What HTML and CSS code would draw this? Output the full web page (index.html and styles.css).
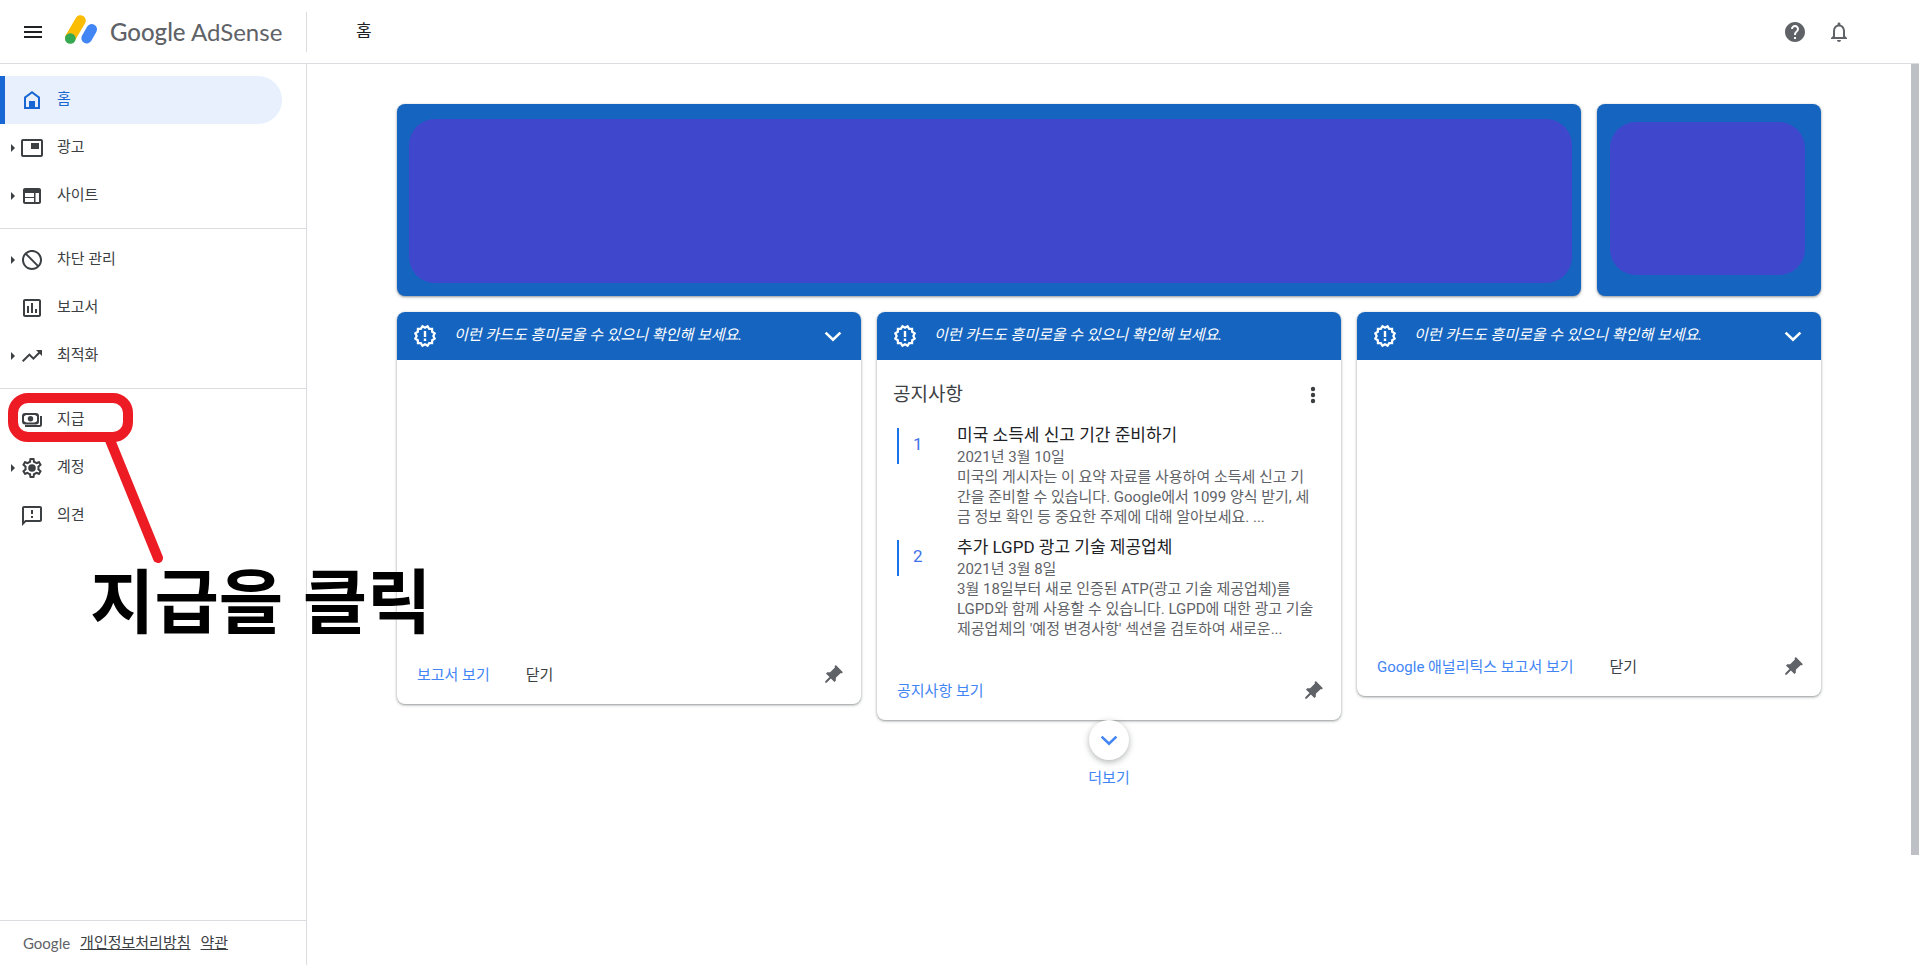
FILE: index.html
```html
<!DOCTYPE html>
<html lang="ko">
<head>
    <meta charset="UTF-8">
    <meta name="viewport" content="width=device-width, initial-scale=1.0">
    <title>Google AdSense</title>
    <link rel="stylesheet" href="styles.css">
</head>
<body>
    <!-- Shared icons -->
    <svg class="sprite" aria-hidden="true">
        <symbol id="badge" viewBox="0 0 24 24">
            <path d="M21.7 14.6 19.2 16.2 19.1 19.1 16.2 19.2 14.6 21.7 12 20.3 9.4 21.7 7.8 19.2 4.9 19.1 4.8 16.2 2.3 14.6 3.7 12 2.3 9.4 4.8 7.8 4.9 4.9 7.8 4.8 9.4 2.3 12 3.7 14.6 2.3 16.2 4.8 19.1 4.9 19.2 7.8 21.7 9.4 20.3 12z" fill="none" stroke="currentColor" stroke-width="2.2"/>
            <path d="M10.8 7h2.4v6h-2.4zm0 7.6h2.4V17h-2.4z"/>
        </symbol>
        <symbol id="chevron" viewBox="0 0 24 24">
            <path d="M4.600 8.600l7.400 7 7.400-7" fill="none" stroke="currentColor" stroke-width="2.6"/>
        </symbol>
        <symbol id="pin" viewBox="0 0 24 24">
            <path transform="rotate(45 12 12)" d="M16 5h1V3H7v2h1v7l-2 2v2h5v6l1 1 1-1v-6h5v-2l-2-2V5z"/>
        </symbol>
    </svg>

    <header class="topbar">
        <div class="brand">
            <button class="icon-btn menu-btn" aria-label="메뉴">
                <svg class="icon" viewBox="0 0 24 24"><path d="M3 18h18v-2H3v2zm0-5h18v-2H3v2zm0-7v2h18V6H3z"/></svg>
            </button>
            <svg class="logo" viewBox="0 0 34 32">
                <path d="M16.500 6.500 6.300 24" stroke="#fbbc04" stroke-width="10.600" stroke-linecap="round"/>
                <circle cx="6.300" cy="24.500" r="5.300" fill="#34a853"/>
                <path d="M27.700 15.300 22.700 24.200" stroke="#4285f4" stroke-width="10.600" stroke-linecap="round"/>
            </svg>
            <span class="brand-name"><b>Google</b> AdSense</span>
        </div>
        <h1 class="page-title">홈</h1>
        <div class="actions">
            <button class="icon-btn" aria-label="도움말">
                <svg class="icon" viewBox="0 0 24 24"><path d="M12 2C6.480 2 2 6.480 2 12s4.480 10 10 10 10-4.480 10-10S17.520 2 12 2zm1 17h-2v-2h2v2zm2.070-7.750l-.9.920C13.450 12.900 13 13.500 13 15h-2v-.5c0-1.100.45-2.100 1.170-2.830l1.240-1.260c.37-.36.590-.86.590-1.410 0-1.100-.9-2-2-2s-2 .9-2 2H8c0-2.210 1.790-4 4-4s4 1.790 4 4c0 .88-.36 1.680-.93 2.250z"/></svg>
            </button>
            <button class="icon-btn" aria-label="알림">
                <svg class="icon" viewBox="0 0 24 24"><path d="M12 22c1.100 0 2-.9 2-2h-4c0 1.100.9 2 2 2zm6-6v-5c0-3.070-1.630-5.640-4.500-6.320V4c0-.83-.67-1.500-1.500-1.500s-1.500.67-1.500 1.500v.68C7.640 5.360 6 7.920 6 11v5l-2 2v1h16v-1l-2-2zm-2 1H8v-6c0-2.480 1.510-4.500 4-4.500s4 2.020 4 4.500v6z"/></svg>
            </button>
        </div>
    </header>

    <div class="layout">
        <aside class="sidebar">
            <nav class="nav">
                <div class="nav-group">
                    <a class="nav-item active" href="#">
                        <svg class="icon" viewBox="0 0 24 24"><path fill-rule="evenodd" d="M4 21V9l8-6 8 6v12H4zm2-2h3v-6h6v6h3v-9l-6-4.500L6 10v9z"/><path d="M9 13h6v8H9z"/></svg>
                        <span>홈</span>
                    </a>
                    <a class="nav-item expandable" href="#">
                        <svg class="icon" viewBox="0 0 24 24"><path d="M19 7h-8v6h8V7zm2-4H3c-1.100 0-2 .9-2 2v14c0 1.100.9 2 2 2h18c1.100 0 2-.9 2-2V5c0-1.100-.9-2-2-2zm0 16H3V5h18v14z"/></svg>
                        <span>광고</span>
                    </a>
                    <a class="nav-item expandable" href="#">
                        <svg class="icon" viewBox="0 0 24 24"><path fill-rule="evenodd" d="M5 4h14c1.100 0 2 .9 2 2v12c0 1.100-.9 2-2 2H5c-1.100 0-2-.9-2-2V6c0-1.100.9-2 2-2zm0 5v4h9V9H5zm0 5v4h9v-4H5zm10.500-5v9H19V9h-3.500z"/></svg>
                        <span>사이트</span>
                    </a>
                </div>
                <div class="nav-group">
                    <a class="nav-item expandable" href="#">
                        <svg class="icon" viewBox="0 0 24 24"><path d="M12 2C6.480 2 2 6.480 2 12s4.480 10 10 10 10-4.480 10-10S17.520 2 12 2zM4 12c0-4.420 3.580-8 8-8 1.850 0 3.550.63 4.900 1.690L5.690 16.900C4.630 15.550 4 13.850 4 12zm8 8c-1.850 0-3.550-.63-4.900-1.690L18.310 7.100C19.370 8.450 20 10.150 20 12c0 4.420-3.580 8-8 8z" transform="matrix(-1 0 0 1 24 0)"/></svg>
                        <span>차단 관리</span>
                    </a>
                    <a class="nav-item" href="#">
                        <svg class="icon" viewBox="0 0 24 24"><path d="M9 17H7v-7h2v7zm4 0h-2V7h2v10zm4 0h-2v-4h2v4zm2 2H5V5h14v14zm0-16H5c-1.100 0-2 .9-2 2v14c0 1.100.9 2 2 2h14c1.100 0 2-.9 2-2V5c0-1.100-.9-2-2-2z"/></svg>
                        <span>보고서</span>
                    </a>
                    <a class="nav-item expandable" href="#">
                        <svg class="icon" viewBox="0 0 24 24"><path d="M16 6l2.290 2.290-4.880 4.880-4-4L2 16.590 3.410 18l6-6 4 4 6.300-6.290L22 12V6z"/></svg>
                        <span>최적화</span>
                    </a>
                </div>
                <div class="nav-group">
                    <a class="nav-item" href="#">
                        <svg class="icon" viewBox="0 0 24 24">
                            <rect x="3" y="6" width="15" height="9.400" rx="2" fill="none" stroke="currentColor" stroke-width="2"/>
                            <circle cx="10.500" cy="10.700" r="2.700"/>
                            <path d="M3 6h4.500L3 9zM18 6h-4.500L18 9zM3 15.400h4.500L3 12.400zM18 15.400h-4.500l4.500-3z"/>
                            <path d="M21 8v8.500a1.500 1.500 0 0 1-1.500 1.500H5" fill="none" stroke="currentColor" stroke-width="2"/>
                        </svg>
                        <span>지급</span>
                    </a>
                    <a class="nav-item expandable" href="#">
                        <svg class="icon" viewBox="0 0 24 24"><path d="M19.430 12.980c.04-.32.070-.64.070-.98 0-.34-.03-.66-.07-.98l2.110-1.650c.19-.15.240-.42.120-.64l-2-3.460c-.09-.16-.26-.25-.44-.25-.06 0-.12.010-.17.030l-2.490 1c-.52-.4-1.080-.73-1.690-.98l-.38-2.650C14.460 2.180 14.250 2 14 2h-4c-.25 0-.46.180-.49.420l-.38 2.650c-.61.250-1.170.590-1.690.980l-2.490-1c-.06-.02-.12-.03-.18-.03-.17 0-.34.090-.43.250l-2 3.460c-.13.220-.07.490.120.640l2.110 1.650c-.04.320-.07.650-.07.980 0 .33.030.66.070.98l-2.110 1.650c-.19.150-.24.420-.12.640l2 3.460c.09.160.26.250.44.250.06 0 .12-.01.170-.03l2.490-1c.52.400 1.080.730 1.690.980l.38 2.650c.03.240.24.420.49.420h4c.25 0 .46-.18.490-.42l.38-2.650c.61-.25 1.170-.59 1.690-.98l2.490 1c.06.020.12.030.18.030.17 0 .34-.09.430-.25l2-3.460c.12-.22.070-.49-.12-.64l-2.110-1.650zm-1.980-1.710c.04.310.05.520.05.730 0 .21-.02.430-.05.730l-.14 1.130.89.700 1.080.840-.7 1.210-1.270-.51-1.040-.42-.9.680c-.43.320-.84.560-1.250.730l-1.060.430-.16 1.130-.2 1.350h-1.400l-.19-1.350-.16-1.130-1.060-.43c-.43-.18-.83-.41-1.230-.71l-.91-.7-1.060.430-1.270.510-.7-1.210 1.080-.84.890-.7-.14-1.130c-.03-.31-.05-.54-.05-.74s.02-.43.050-.73l.14-1.130-.89-.7-1.080-.84.700-1.210 1.270.510 1.040.420.900-.68c.43-.32.840-.56 1.250-.73l1.060-.43.160-1.130.2-1.350h1.390l.19 1.350.16 1.130 1.060.430c.43.180.83.410 1.230.710l.91.700 1.060-.43 1.270-.51.700 1.210-1.070.850-.89.700.14 1.130z"/><circle cx="12" cy="12" r="3.800"/></svg>
                        <span>계정</span>
                    </a>
                    <a class="nav-item" href="#">
                        <svg class="icon" viewBox="0 0 24 24"><path d="M20 2H4c-1.100 0-2 .9-2 2v18l4-4h14c1.100 0 2-.9 2-2V4c0-1.100-.9-2-2-2zm0 14H5.200L4 17.200V4h16v12zm-9-4h2v2h-2zm0-6h2v4h-2z"/></svg>
                        <span>의견</span>
                    </a>
                </div>
            </nav>
            <div class="legal">
                <span class="legal-brand">Google</span>
                <a href="#">개인정보처리방침</a>
                <a href="#">약관</a>
            </div>
        </aside>

        <main class="main">
            <div class="summary">
                <section class="panel"><div class="mask"></div></section>
                <section class="panel panel-small"><div class="mask"></div></section>
            </div>

            <div class="cards">
                <section class="card">
                    <div class="card-head">
                        <svg class="icon"><use href="#badge"/></svg>
                        <em>이런 카드도 흥미로울 수 있으니 확인해 보세요.</em>
                        <button class="icon-btn" aria-label="접기"><svg class="icon"><use href="#chevron"/></svg></button>
                    </div>
                    <div class="card-body body-report"></div>
                    <div class="card-foot">
                        <a href="#">보고서 보기</a>
                        <button class="text-btn">닫기</button>
                        <button class="icon-btn pin-btn" aria-label="고정"><svg class="icon"><use href="#pin"/></svg></button>
                    </div>
                </section>

                <section class="card">
                    <div class="card-head">
                        <svg class="icon"><use href="#badge"/></svg>
                        <em>이런 카드도 흥미로울 수 있으니 확인해 보세요.</em>
                    </div>
                    <div class="card-body body-news">
                        <div class="news-head">
                            <h2>공지사항</h2>
                            <button class="icon-btn" aria-label="더보기 메뉴">
                                <svg class="icon" viewBox="0 0 24 24"><circle cx="12" cy="6" r="2.200"/><circle cx="12" cy="12" r="2.200"/><circle cx="12" cy="18" r="2.200"/></svg>
                            </button>
                        </div>
                        <article class="news">
                            <span class="news-num">1</span>
                            <div>
                                <h3>미국 소득세 신고 기간 준비하기</h3>
                                <time>2021년 3월 10일</time>
                                <p>미국의 게시자는 이 요약 자료를 사용하여 소득세 신고 기<br>간을 준비할 수 있습니다. Google에서 1099 양식 받기, 세<br>금 정보 확인 등 중요한 주제에 대해 알아보세요. ...</p>
                            </div>
                        </article>
                        <article class="news">
                            <span class="news-num">2</span>
                            <div>
                                <h3>추가 LGPD 광고 기술 제공업체</h3>
                                <time>2021년 3월 8일</time>
                                <p>3월 18일부터 새로 인증된 ATP(광고 기술 제공업체)를<br>LGPD와 함께 사용할 수 있습니다. LGPD에 대한 광고 기술<br>제공업체의 '예정 변경사항' 섹션을 검토하여 새로운...</p>
                            </div>
                        </article>
                    </div>
                    <div class="card-foot">
                        <a href="#">공지사항 보기</a>
                        <button class="icon-btn pin-btn" aria-label="고정"><svg class="icon"><use href="#pin"/></svg></button>
                    </div>
                </section>

                <section class="card">
                    <div class="card-head">
                        <svg class="icon"><use href="#badge"/></svg>
                        <em>이런 카드도 흥미로울 수 있으니 확인해 보세요.</em>
                        <button class="icon-btn" aria-label="접기"><svg class="icon"><use href="#chevron"/></svg></button>
                    </div>
                    <div class="card-body body-analytics"></div>
                    <div class="card-foot">
                        <a href="#">Google 애널리틱스 보고서 보기</a>
                        <button class="text-btn">닫기</button>
                        <button class="icon-btn pin-btn" aria-label="고정"><svg class="icon"><use href="#pin"/></svg></button>
                    </div>
                </section>
            </div>

            <div class="more">
                <button class="more-btn" id="more" aria-label="더보기"><svg class="icon"><use href="#chevron"/></svg></button>
                <label for="more">더보기</label>
            </div>
        </main>
        <div class="scroll-thumb"></div>
    </div>

    <!-- Guide callout -->
    <svg class="callout" viewBox="0 0 170 180">
        <rect x="13" y="8" width="115" height="39" rx="15" fill="none" stroke="#ed1c24" stroke-width="10"/>
        <path d="M110 50l48 118" stroke="#ed1c24" stroke-width="10" stroke-linecap="round"/>
    </svg>
    <p class="callout-text">지급을 클릭</p>
</body>
</html>
```
FILE: styles.css
```css
* {
    box-sizing: border-box;
}
body {
    margin: 0;
    height: 100vh;
    display: flex;
    flex-direction: column;
    overflow: hidden;
    background: #fff;
    color: #3c4043;
    font-family: Roboto, "Noto Sans CJK KR", sans-serif;
    font-size: 15px;
    line-height: 20px;
}
h1, h2, h3, p {
    margin: 0;
    font-weight: 400;
}
a {
    color: inherit;
    text-decoration: none;
}
button {
    padding: 0;
    border: none;
    background: none;
    color: inherit;
    font: inherit;
    cursor: pointer;
}
.sprite {
    display: none;
}
.icon {
    display: block;
    flex: none;
    width: 24px;
    height: 24px;
    fill: currentColor;
}

/* Top bar */
.topbar {
    display: flex;
    align-items: center;
    flex: none;
    height: 64px;
    border-bottom: 1px solid #dadce0;
}
.brand {
    display: flex;
    align-items: center;
    width: 307px;
    height: 40px;
    padding-left: 21px;
    border-right: 1px solid #dadce0;
}
.menu-btn {
    color: #202124;
}
.logo {
    width: 34px;
    height: 32px;
    margin: 0 12px 4px 19px;
}
.brand-name {
    color: #5f6368;
    font-family: Lato, sans-serif;
    font-size: 24px;
    line-height: 32px;
    white-space: nowrap;
}
.brand-name b {
    font-weight: 500;
}
.page-title {
    margin-left: 49px;
    padding-bottom: 2px;
    color: #202124;
    font-size: 17px;
}
.actions {
    display: flex;
    gap: 20px;
    margin-left: auto;
    padding-right: 68px;
    color: #5f6368;
}

/* Sidebar */
.layout {
    display: flex;
    flex: 1;
    min-height: 0;
}
.sidebar {
    display: flex;
    flex-direction: column;
    flex: none;
    width: 307px;
    border-right: 1px solid #dadce0;
}
.nav {
    flex: 1;
    padding-top: 4px;
}
.nav-group {
    padding: 8px 0;
}
.nav-group + .nav-group {
    padding-top: 7px;
    border-top: 1px solid #dadce0;
}
.nav-item {
    display: flex;
    align-items: center;
    gap: 13px;
    height: 48px;
    margin-right: 24px;
    padding-left: 20px;
}
.nav-item span {
    padding-bottom: 2px;
}
.nav-item.active {
    padding-left: 15px;
    border-left: 5px solid #1967d2;
    border-radius: 0 24px 24px 0;
    background: #e8f0fe;
    color: #1967d2;
}
.nav-item.expandable {
    padding-left: 11px;
}
.nav-item.expandable::before {
    content: "";
    margin-right: -8px;
    border: 4px solid transparent;
    border-left-color: #3c4043;
    border-right-width: 0;
}
.legal {
    display: flex;
    align-items: center;
    gap: 10px;
    height: 45px;
    padding-left: 23px;
    border-top: 1px solid #dadce0;
}
.legal a {
    text-decoration: underline;
}
.legal-brand {
    color: #5f6368;
    font-family: Lato, sans-serif;
}

/* Main */
.main {
    flex: 1;
    padding: 40px 90px 0;
}
.scroll-thumb {
    width: 8px;
    height: calc(100% - 110px);
    background: #bdc1c6;
}
.summary {
    display: grid;
    grid-template-columns: 1fr 224px;
    gap: 16px;
    margin-bottom: 16px;
}
.panel,
.card {
    border-radius: 8px;
    box-shadow: 0 1px 2px rgba(60, 64, 67, 0.4), 0 1px 3px 1px rgba(60, 64, 67, 0.15);
}
.panel {
    display: flex;
    height: 192px;
    padding: 15px 9px 13px 12px;
    background: #1565c0;
}
.panel-small {
    padding: 18px 16px 21px 13px;
}
.mask {
    flex: 1;
    border-radius: 26px;
    background: #3f48cc;
}
.cards {
    display: grid;
    grid-template-columns: repeat(3, 1fr);
    gap: 16px;
    align-items: start;
}
.card {
    overflow: hidden;
    background: #fff;
}
.card-head {
    display: flex;
    align-items: center;
    gap: 17px;
    height: 48px;
    padding: 0 16px;
    background: #1565c0;
    color: #fff;
}
.card-head em {
    padding-bottom: 2px;
}
.card-head .icon-btn {
    margin-left: auto;
}
.body-report {
    min-height: 286px;
}
.body-news {
    min-height: 302px;
    padding: 21px 16px 0;
}
.body-analytics {
    min-height: 278px;
}
.news-head {
    display: flex;
    align-items: center;
    justify-content: space-between;
    height: 28px;
    margin-bottom: 14px;
}
.news-head h2 {
    font-size: 19px;
}
.news {
    display: flex;
    gap: 42px;
    margin: 0 0 8px 4px;
    color: #5f6368;
    white-space: nowrap;
}
.news-num {
    flex: none;
    width: 18px;
    height: 36px;
    margin-top: 5px;
    padding-left: 14px;
    border-left: 2px solid #1a73e8;
    color: #4272e8;
    font-size: 17px;
    line-height: 32px;
}
.news h3 {
    color: #202124;
    font-size: 17px;
    line-height: 24px;
}
.news time {
    display: block;
}
.card-foot {
    display: flex;
    align-items: center;
    gap: 36px;
    height: 58px;
    padding: 0 16px 0 20px;
}
.card-foot a,
.more {
    color: #4285f4;
}
.pin-btn {
    margin-left: auto;
    color: #5f6368;
}
.more {
    display: flex;
    flex-direction: column;
    align-items: center;
    gap: 8px;
}
.more-btn {
    display: flex;
    align-items: center;
    justify-content: center;
    width: 40px;
    height: 40px;
    border-radius: 50%;
    background: #fff;
    box-shadow: 0 2px 6px rgba(60, 64, 67, 0.4);
}

/* Callout drawn over the page */
.callout {
    position: absolute;
    top: 390px;
    left: 0;
    width: 170px;
    height: 180px;
}
.callout-text {
    position: absolute;
    top: 554px;
    left: 90px;
    color: #000;
    font-family: "Liberation Sans", "Noto Sans CJK KR", sans-serif;
    font-size: 70px;
    font-weight: 700;
    line-height: 100px;
    white-space: nowrap;
}
```
